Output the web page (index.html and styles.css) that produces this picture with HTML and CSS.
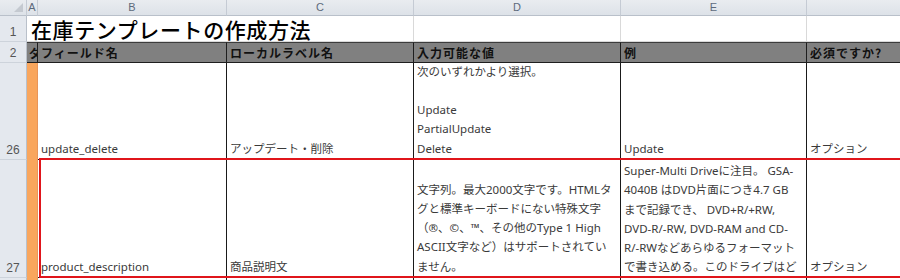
FILE: index.html
```html
<!DOCTYPE html>
<html lang="ja">
<head>
<meta charset="utf-8">
<link rel="stylesheet" href="styles.css">
</head>
<body>
<div class="sheet">
  <div class="colhead corner"><span class="tri"></span></div>
  <div class="colhead">A</div>
  <div class="colhead">B</div>
  <div class="colhead">C</div>
  <div class="colhead">D</div>
  <div class="colhead">E</div>
  <div class="colhead last"></div>

  <div class="rowhead">1</div>
  <div class="title">在庫テンプレートの作成方法</div>
  <div class="blank"></div>
  <div class="blank"></div>
  <div class="blank last"></div>

  <div class="rowhead">2</div>
  <div class="hcell clip">ダ</div>
  <div class="hcell">フィールド名</div>
  <div class="hcell">ローカルラベル名</div>
  <div class="hcell">入力可能な値</div>
  <div class="hcell">例</div>
  <div class="hcell last">必須ですか?</div>

  <div class="rowhead">26</div>
  <div class="mark"></div>
  <div class="cell">update_delete</div>
  <div class="cell">アップデート・削除</div>
  <div class="cell">次のいずれかより選択。<br>&nbsp;<br>Update<br>PartialUpdate<br>Delete</div>
  <div class="cell">Update</div>
  <div class="cell last">オプション</div>

  <div class="rowhead r27 c1">27</div>
  <div class="mark r27 c2"></div>
  <div class="cell r27 c3">product_description</div>
  <div class="cell r27 c4">商品説明文</div>
  <div class="cell r27 c5">文字列。最大2000文字です。HTMLタ<br>グと標準キーボードにない特殊文字<br>（®、©、™、その他のType 1 High<br>ASCII文字など）はサポートされてい<br>ません。</div>
  <div class="cell top r27 c6">Super-Multi Driveに注目。 GSA-<br>4040B はDVD片面につき4.7 GB<br>まで記録でき、 DVD+R/+RW,<br>DVD-R/-RW, DVD-RAM and CD-<br>R/-RWなどあらゆるフォーマット<br>で書き込める。このドライブはど</div>
  <div class="cell last r27 c7">オプション</div>
  <div class="selection"></div>

  <div class="rowhead r28 c1"></div>
  <div class="mark r28 c2"></div>
  <div class="cell r28 c3"></div>
  <div class="cell r28 c4"></div>
  <div class="cell r28 c5"></div>
  <div class="cell r28 c6"></div>
  <div class="cell last r28 c7"></div>
</div>
</body>
</html>
```

FILE: styles.css
```css
* { box-sizing: border-box; }
html, body { margin: 0; padding: 0; background: #fff; }
body { width: 900px; height: 280px; overflow: hidden; }

.sheet {
  display: grid;
  grid-template-columns: 27px 11px 189px 187px 207px 186px 93px;
  grid-template-rows: 16px 26px 21px 97px 118px 20px;
  font-family: "Noto Sans", "Noto Sans CJK JP", sans-serif;
  font-size: 11.5px;
  color: #3a3a3a;
}

.r27 { grid-row: 5; }
.r28 { grid-row: 6; }
.c1 { grid-column: 1; }
.c2 { grid-column: 2; }
.c3 { grid-column: 3; }
.c4 { grid-column: 4; }
.c5 { grid-column: 5; }
.c6 { grid-column: 6; }
.c7 { grid-column: 7; }

.colhead {
  background: linear-gradient(#e9ecf0, #dde2e8);
  border-right: 1px solid #c5cbd4;
  border-bottom: 1px solid #b9c0ca;
  color: #5d6a7c;
  font-family: "Liberation Sans", sans-serif;
  font-size: 11px;
  display: flex;
  align-items: center;
  justify-content: center;
  line-height: 1;
}
.colhead.last { border-right: none; }
.corner { justify-content: flex-end; align-items: flex-end; padding: 0 3px 3px 0; }
.tri {
  width: 0; height: 0;
  border-left: 9px solid transparent;
  border-bottom: 9px solid #c4c9d0;
}

.rowhead {
  background: #e4e8ee;
  border-right: 1px solid #b9c0ca;
  border-bottom: 1px solid #cdd3db;
  color: #555;
  font-family: "Liberation Sans", sans-serif;
  font-size: 12px;
  display: flex;
  align-items: flex-end;
  justify-content: center;
  padding-bottom: 2px;
}

.title {
  grid-column: 2 / 5;
  border-right: 1px solid #d9d9d9;
  border-bottom: 1px solid #d9d9d9;
  font-family: "Noto Sans CJK JP", sans-serif;
  font-weight: 500;
  font-size: 21px;
  color: #000;
  letter-spacing: 0.6px;
  padding-left: 4px;
  line-height: 26px;
  white-space: nowrap;
}
.blank { border-right: 1px solid #d9d9d9; border-bottom: 1px solid #d9d9d9; }
.blank.last { border-right: none; }

.hcell {
  background: #808080;
  border-top: 1px solid #3c3c3c;
  border-right: 1px solid #1e1e1e;
  border-bottom: 1px solid #1e1e1e;
  color: #111;
  font-family: "Noto Sans CJK JP", sans-serif;
  font-weight: 700;
  font-size: 12px;
  letter-spacing: 1px;
  padding: 1px 0 0 3px;
  line-height: 18px;
  white-space: nowrap;
  overflow: hidden;
}
.hcell.clip { padding-left: 2px; letter-spacing: 0; }
.hcell.last { border-right: none; }

.mark { background: #f9a65d; border-right: 1px solid #e8955a; }

.cell {
  border-right: 1px solid #1a1a1a;
  border-bottom: 1px solid #1a1a1a;
  display: flex;
  flex-direction: column;
  justify-content: flex-end;
  padding: 0 0 1px 3px;
  line-height: 19.3px;
  white-space: nowrap;
  overflow: hidden;
}
.cell.top { justify-content: flex-start; padding-top: 1px; }
.cell.last { border-right: none; }

.selection {
  grid-column: 3 / 8;
  grid-row: 5;
  border: 2px solid #e0151b;
  border-right: none;
  margin-top: -2px;
  margin-left: 1px;
  pointer-events: none;
}
```
